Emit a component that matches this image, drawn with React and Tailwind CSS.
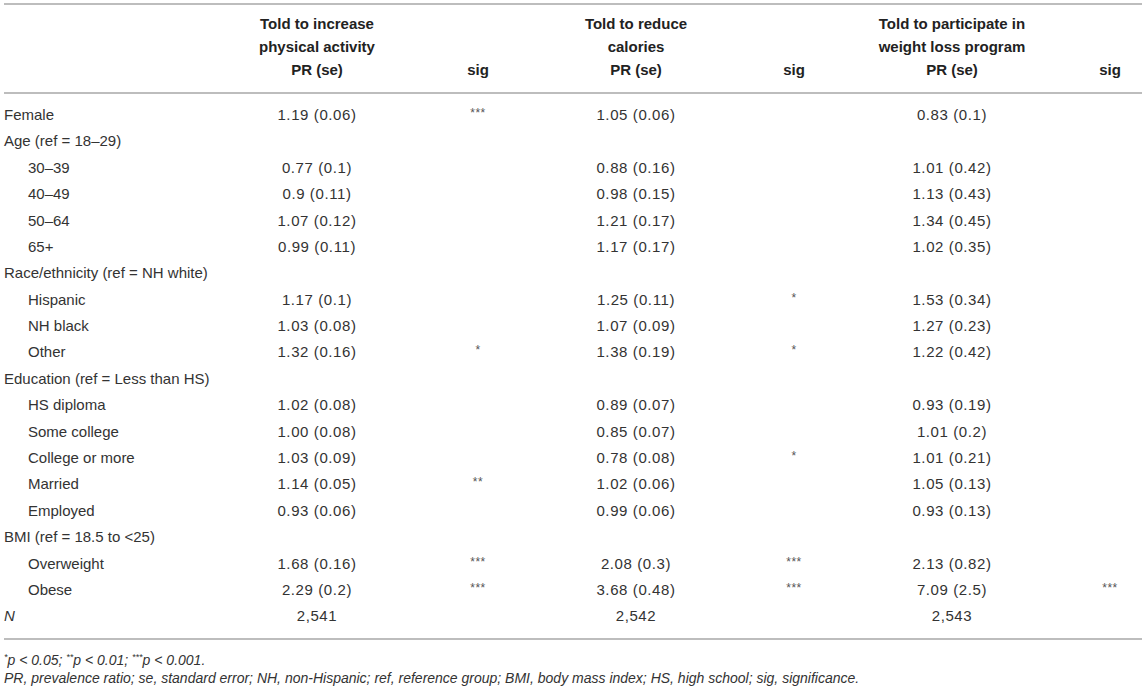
const rows = [
  { label: "Female", v: ["1.19 (0.06)", "***", "1.05 (0.06)", "", "0.83 (0.1)", ""] },
  { label: "Age (ref = 18–29)", v: null },
  { label: "30–39", sub: true, v: ["0.77 (0.1)", "", "0.88 (0.16)", "", "1.01 (0.42)", ""] },
  { label: "40–49", sub: true, v: ["0.9 (0.11)", "", "0.98 (0.15)", "", "1.13 (0.43)", ""] },
  { label: "50–64", sub: true, v: ["1.07 (0.12)", "", "1.21 (0.17)", "", "1.34 (0.45)", ""] },
  { label: "65+", sub: true, v: ["0.99 (0.11)", "", "1.17 (0.17)", "", "1.02 (0.35)", ""] },
  { label: "Race/ethnicity (ref = NH white)", v: null },
  { label: "Hispanic", sub: true, v: ["1.17 (0.1)", "", "1.25 (0.11)", "*", "1.53 (0.34)", ""] },
  { label: "NH black", sub: true, v: ["1.03 (0.08)", "", "1.07 (0.09)", "", "1.27 (0.23)", ""] },
  { label: "Other", sub: true, v: ["1.32 (0.16)", "*", "1.38 (0.19)", "*", "1.22 (0.42)", ""] },
  { label: "Education (ref = Less than HS)", v: null },
  { label: "HS diploma", sub: true, v: ["1.02 (0.08)", "", "0.89 (0.07)", "", "0.93 (0.19)", ""] },
  { label: "Some college", sub: true, v: ["1.00 (0.08)", "", "0.85 (0.07)", "", "1.01 (0.2)", ""] },
  { label: "College or more", sub: true, v: ["1.03 (0.09)", "", "0.78 (0.08)", "*", "1.01 (0.21)", ""] },
  { label: "Married", sub: true, v: ["1.14 (0.05)", "**", "1.02 (0.06)", "", "1.05 (0.13)", ""] },
  { label: "Employed", sub: true, v: ["0.93 (0.06)", "", "0.99 (0.06)", "", "0.93 (0.13)", ""] },
  { label: "BMI (ref = 18.5 to <25)", v: null },
  { label: "Overweight", sub: true, v: ["1.68 (0.16)", "***", "2.08 (0.3)", "***", "2.13 (0.82)", ""] },
  { label: "Obese", sub: true, v: ["2.29 (0.2)", "***", "3.68 (0.48)", "***", "7.09 (2.5)", "***"] },
  { label: "N", italic: true, v: ["2,541", "", "2,542", "", "2,543", ""] },
];

const groups = [
  ["Told to increase", "physical activity"],
  ["Told to reduce", "calories"],
  ["Told to participate in", "weight loss program"],
];

const cols = "grid grid-cols-[184px_258px_64px_252px_64px_252px_64px]";

export default function App() {
  return (
    <div
      className="bg-white w-[1146px] h-[686px] px-[4px] pt-[3px] text-[#333] text-[15px]"
      style={{ fontFamily: '"Liberation Sans", Arial, sans-serif' }}
    >
      {/* header */}
      <div className="border-t-2 border-b-2 border-[#bdbdbd] pt-[7px] pb-[11px] font-bold text-[#222]">
        <div className={cols + " leading-[23px]"}>
          <div />
          <div className="text-center">{groups[0][0]}<br />{groups[0][1]}</div>
          <div />
          <div className="text-center">{groups[1][0]}<br />{groups[1][1]}</div>
          <div />
          <div className="text-center">{groups[2][0]}<br />{groups[2][1]}</div>
          <div />
        </div>
        <div className={cols + " leading-[23px]"}>
          <div />
          {groups.map((g, i) => [
            <div key={"p" + i} className="text-center">PR (se)</div>,
            <div key={"s" + i} className="text-center">sig</div>,
          ])}
        </div>
      </div>

      {/* body */}
      <div className="border-b-2 border-[#bdbdbd] py-[8px]">
        {rows.map((r, i) => (
          <div key={i} className={cols + " h-[26.4px] items-center"}>
            <div
              className={
                "whitespace-nowrap " + (r.sub ? "pl-[24px] " : "") + (r.italic ? "italic" : "")
              }
            >
              {r.label}
            </div>
            {r.v &&
              r.v.map((c, j) =>
                j % 2 === 0 ? (
                  <div key={j} className="text-center tracking-[0.6px]">{c}</div>
                ) : (
                  <div key={j} className="text-center">
                    <span className="text-[12px] leading-none align-[3px] text-[#555] tracking-[0.5px]">{c}</span>
                  </div>
                )
              )}
          </div>
        ))}
      </div>

      {/* footnotes */}
      <div className="pt-[8px] italic text-[14px] leading-[18px] text-[#333]">
        <p>
          <span className="text-[9px] align-[5px]">*</span>p &lt; 0.05;{" "}
          <span className="text-[9px] align-[5px]">**</span>p &lt; 0.01;{" "}
          <span className="text-[9px] align-[5px]">***</span>p &lt; 0.001.
        </p>
        <p className="whitespace-nowrap">
          PR, prevalence ratio; se, standard error; NH, non-Hispanic; ref, reference group; BMI, body mass index; HS,
          high school; sig, significance.
        </p>
      </div>
    </div>
  );
}
